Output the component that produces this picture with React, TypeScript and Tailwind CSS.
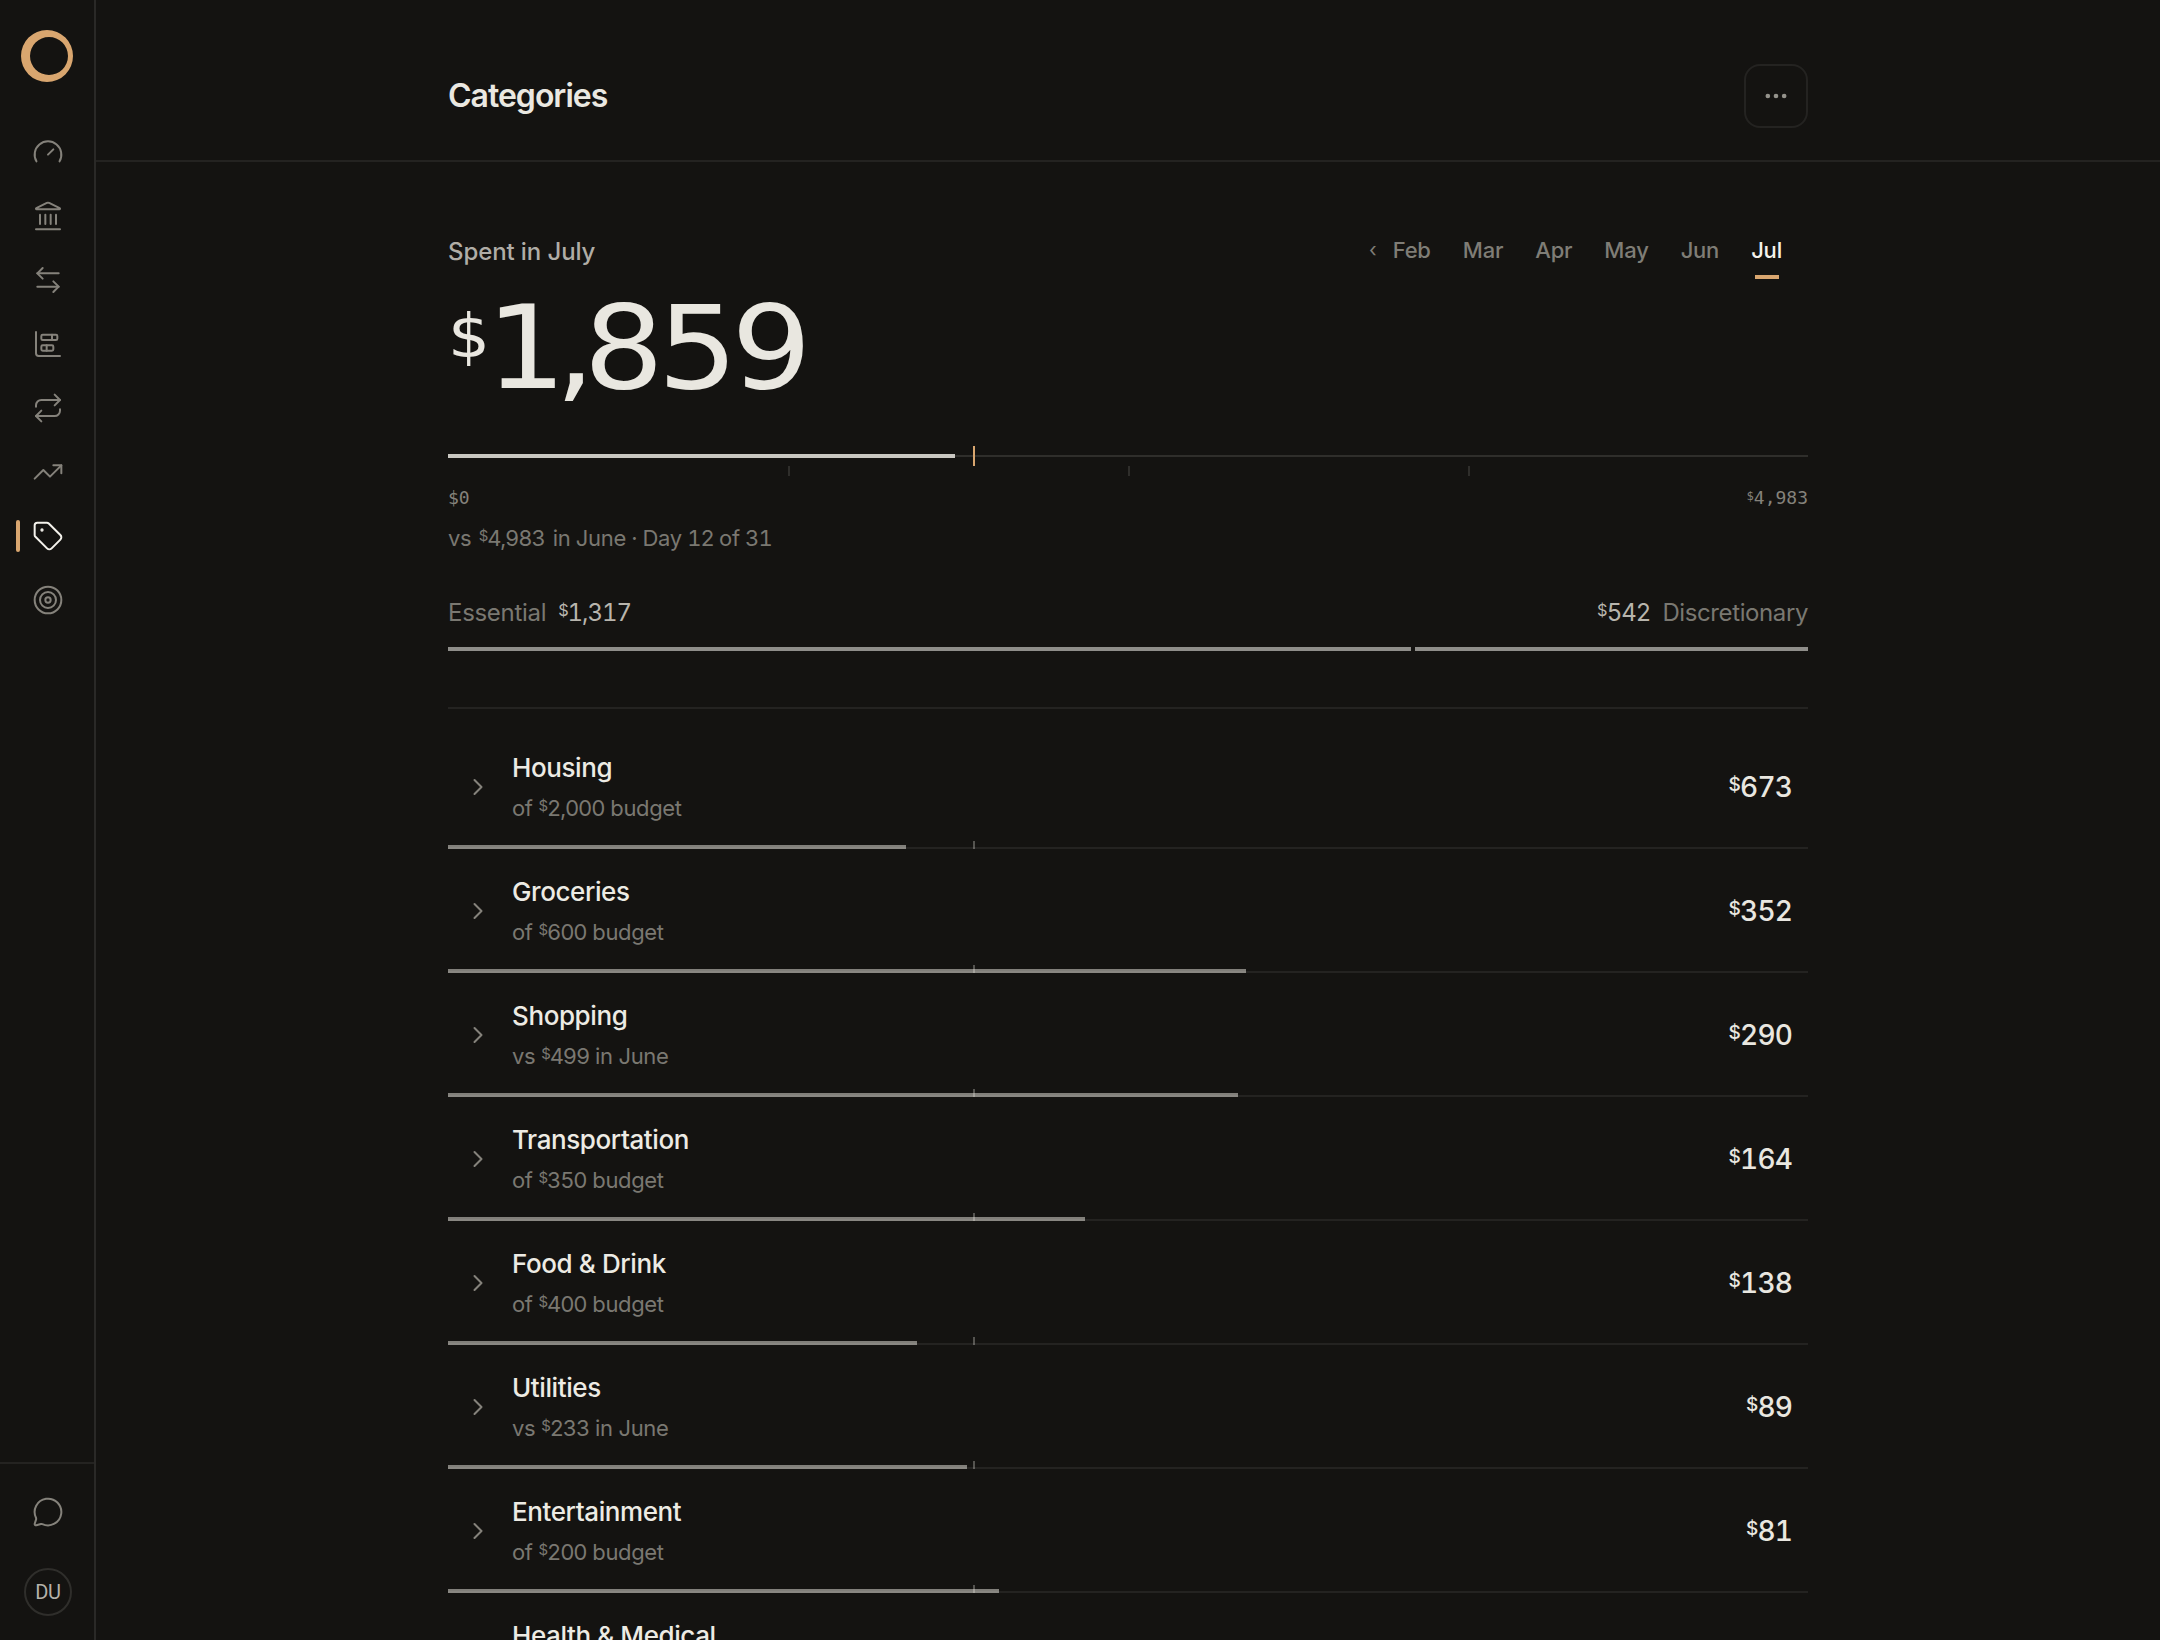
import {
  ArrowLeftRight,
  ChartBarStacked,
  ChevronRight,
  Ellipsis,
  Gauge,
  Landmark,
  MessageCircle,
  Repeat,
  Tag,
  Target,
  TrendingUp,
} from "lucide-react";
import clsx from "clsx";

const navItems = [
  { label: "Dashboard", icon: Gauge },
  { label: "Accounts", icon: Landmark },
  { label: "Transactions", icon: ArrowLeftRight },
  { label: "Cash flow", icon: ChartBarStacked },
  { label: "Recurring", icon: Repeat },
  { label: "Investments", icon: TrendingUp },
  { label: "Categories", icon: Tag, active: true },
  { label: "Goals", icon: Target },
];

const months = ["Feb", "Mar", "Apr", "May", "Jun", "Jul"];

const dayOfMonth = 12;
const daysInMonth = 31;
const pace = `${(dayOfMonth / daysInMonth) * 100}%`;

const categories = [
  { name: "Housing", spent: 673, limit: 2000, kind: "budget" },
  { name: "Groceries", spent: 352, limit: 600, kind: "budget" },
  { name: "Shopping", spent: 290, limit: 499, kind: "previous" },
  { name: "Transportation", spent: 164, limit: 350, kind: "budget" },
  { name: "Food & Drink", spent: 138, limit: 400, kind: "budget" },
  { name: "Utilities", spent: 89, limit: 233, kind: "previous" },
  { name: "Entertainment", spent: 81, limit: 200, kind: "budget" },
  { name: "Health & Medical", spent: 62, limit: 150, kind: "budget" },
];

const Money = ({ value, className }: { value: number; className?: string }) => (
  <span className={clsx("tabular-nums", className)}>
    <span className="relative -top-[0.32em] text-[0.68em] leading-none">$</span>
    {value.toLocaleString("en-US")}
  </span>
);

const Sidebar = () => {
  return (
    <aside className="flex w-24 shrink-0 flex-col border-r-2 border-[#2a2927]">
      <div className="flex h-[120px] pt-[30px] pl-[21px]">
        <svg width="52" height="52" viewBox="0 0 52 52" aria-hidden="true">
          <path
            fill="#d9a66f"
            fillRule="evenodd"
            d="M26 0a26 26 0 1 0 0 52a26 26 0 1 0 0-52ZM28 7a19 19 0 1 1 0 38a19 19 0 1 1 0-38Z"
          />
        </svg>
      </div>

      <nav className="flex flex-col">
        {navItems.map(({ label, icon: Icon, active }) => (
          <a
            key={label}
            aria-label={label}
            className={clsx(
              "relative flex h-16 items-center pl-8",
              active ? "text-[#f4f2ec]" : "text-[#85827b]"
            )}
          >
            {active && (
              <span className="absolute top-4 left-4 h-8 w-1 rounded-xs bg-[#d9a66f]" />
            )}
            <Icon size={32} strokeWidth={1.5} />
          </a>
        ))}
      </nav>

      <div className="mt-auto flex h-[178px] flex-col items-start border-t-2 border-[#242321] pt-8 pl-8">
        <MessageCircle size={32} strokeWidth={1.5} className="text-[#85827b]" />
        <div className="mt-10 -ml-2 flex h-12 w-12 items-center justify-center rounded-full border-2 border-[#2f2e2b] font-['Roboto',sans-serif] text-[20px] tracking-[-0.3px] text-[#b5b2aa]">
          DU
        </div>
      </div>
    </aside>
  );
};

const Header = () => {
  return (
    <header className="flex h-[162px] justify-center border-b-2 border-[#242321]">
      <div className="flex h-full w-[1360px] items-center justify-between pt-16 pb-8">
        <h1 className="text-[32px] leading-[48px] font-semibold tracking-[-1px] text-[#eae8e1]">
          Categories
        </h1>
        <button
          aria-label="More"
          className="flex h-16 w-16 items-center justify-center rounded-2xl border-2 border-[#242321] text-[#94928b]"
        >
          <Ellipsis size={28} strokeWidth={2} />
        </button>
      </div>
    </header>
  );
};

const MonthPicker = () => {
  return (
    <div className="flex text-[22px] leading-8 text-[#7f7d76]">
      <span className="mr-4 text-[20px]">‹</span>
      <div className="mr-[26px] flex gap-8 font-medium tracking-[-0.2px]">
        {months.map((month) => (
          <div
            key={month}
            className={clsx(
              "flex flex-col items-center",
              month === "Jul" && "text-[#f4f2ec]"
            )}
          >
            {month}
            {month === "Jul" && (
              <span className="mt-[9px] h-1 w-6 bg-[#d9a66f]" />
            )}
          </div>
        ))}
      </div>
    </div>
  );
};

const Summary = () => {
  return (
    <section className="flex flex-col">
      <div className="flex h-[171px] items-start justify-between">
        <div className="flex flex-col">
          <p className="text-[24px] leading-9 font-medium tracking-[-0.1px] text-[#b0ada6]">
            Spent in July
          </p>
          <p className="mt-5 flex items-start font-['DejaVu_Sans',sans-serif] text-[#e9e7e0]">
            <span className="mt-4 origin-left scale-x-110 text-[60px] leading-[60px]">$</span>
            <span className="origin-left scale-x-110 text-[115px] leading-[116px] tracking-[-6px]">
              <span className="tracking-[-10.5px]">1,</span>859
            </span>
          </p>
        </div>
        <MonthPicker />
      </div>

      <div className="relative mt-[41px] flex h-5 items-center">
        <div className="h-0.5 w-full bg-[#2f2e2b]" />
        <div
          className="absolute top-2 left-0 h-1 bg-[#c9c7c1]"
          style={{ width: `${(1859 / 4983) * 100}%` }}
        />
        <div className="absolute top-0 h-5 w-0.5 -translate-x-px bg-[#d9a66f]" style={{ left: pace }} />
      </div>
      <div className="grid h-2.5 grid-cols-4">
        <span className="-mr-0.5 border-r-2 border-[#2f2e2b]" />
        <span className="-mr-0.5 border-r-2 border-[#2f2e2b]" />
        <span className="-mr-0.5 border-r-2 border-[#2f2e2b]" />
      </div>
      <div className="mt-3 flex justify-between font-['DejaVu_Sans_Mono',monospace] text-[18px] leading-5 text-[#85827b]">
        <span>$0</span>
        <Money value={4983} />
      </div>
      <p className="mt-3.5 text-[22px] leading-8 tracking-[-0.25px] text-[#7a7871] [word-spacing:-0.8px]">
        vs <Money value={4983} className="mr-[3px] ml-0.5 tracking-[-0.05em]" /> in June · Day{" "}
        <span className="tracking-[-0.04em] tabular-nums">12</span> of{" "}
        <span className="tracking-[-0.04em] tabular-nums">31</span>
      </p>

      <div className="mt-[41px] flex justify-between text-[24px] leading-9 tracking-[-0.3px] text-[#7a7871]">
        <div className="flex gap-3">
          <span>Essential</span>
          <Money value={1317} className="tracking-[-0.045em] text-[#b8b5ad]" />
        </div>
        <div className="flex gap-3">
          <Money value={542} className="tracking-[-0.04em] text-[#b8b5ad]" />
          <span className="tracking-[-0.4px]">Discretionary</span>
        </div>
      </div>
      <div className="mt-4 flex h-1 gap-1">
        <div className="bg-[#8f8e8a]" style={{ flexGrow: 963 }} />
        <div className="bg-[#8f8e8a]" style={{ flexGrow: 393 }} />
      </div>
    </section>
  );
};

const CategoryRow = ({ name, spent, limit, kind }: (typeof categories)[number]) => {
  return (
    <li className="relative flex h-[124px] shrink-0 items-center border-b-2 border-[#242321] px-4 pt-0.5">
      <ChevronRight size={28} strokeWidth={1.75} className="text-[#85827b]" />
      <div className="ml-5 flex flex-col gap-1.5">
        <span className="text-[26px] leading-9 font-medium tracking-[-0.4px] text-[#edebe4]">{name}</span>
        <span className="text-[22px] leading-8 tracking-[-0.35px] text-[#7a7871]">
          {kind === "budget" ? "of " : "vs "}
          <Money value={limit} className="tracking-[-0.05em]" />
          {kind === "budget" ? " budget" : " in June"}
        </span>
      </div>
      <Money
        value={spent}
        className="ml-auto text-[28px] leading-9 font-medium tracking-[-0.03em] text-[#e9e7e0]"
      />

      <div
        className="absolute -bottom-0.5 left-0 h-1 bg-[#edebe4]/50"
        style={{ width: `${(spent / limit) * 100}%` }}
      />
      <div className="absolute -bottom-0.5 h-2 w-0.5 -translate-x-px bg-[#edebe4]/30" style={{ left: pace }} />
    </li>
  );
};

export default function App() {
  return (
    <div className="flex h-[1640px] w-[2160px] overflow-hidden bg-[#141311] font-['Inter',sans-serif] text-[#edebe4]">
      <Sidebar />
      <main className="flex min-w-0 flex-1 flex-col">
        <Header />
        <div className="mx-auto flex w-[1360px] flex-col pt-[72px]">
          <Summary />
          <ul className="mt-14 flex flex-col border-t-2 border-[#242321] pt-4">
            {categories.map((category) => (
              <CategoryRow key={category.name} {...category} />
            ))}
          </ul>
        </div>
      </main>
    </div>
  );
}
